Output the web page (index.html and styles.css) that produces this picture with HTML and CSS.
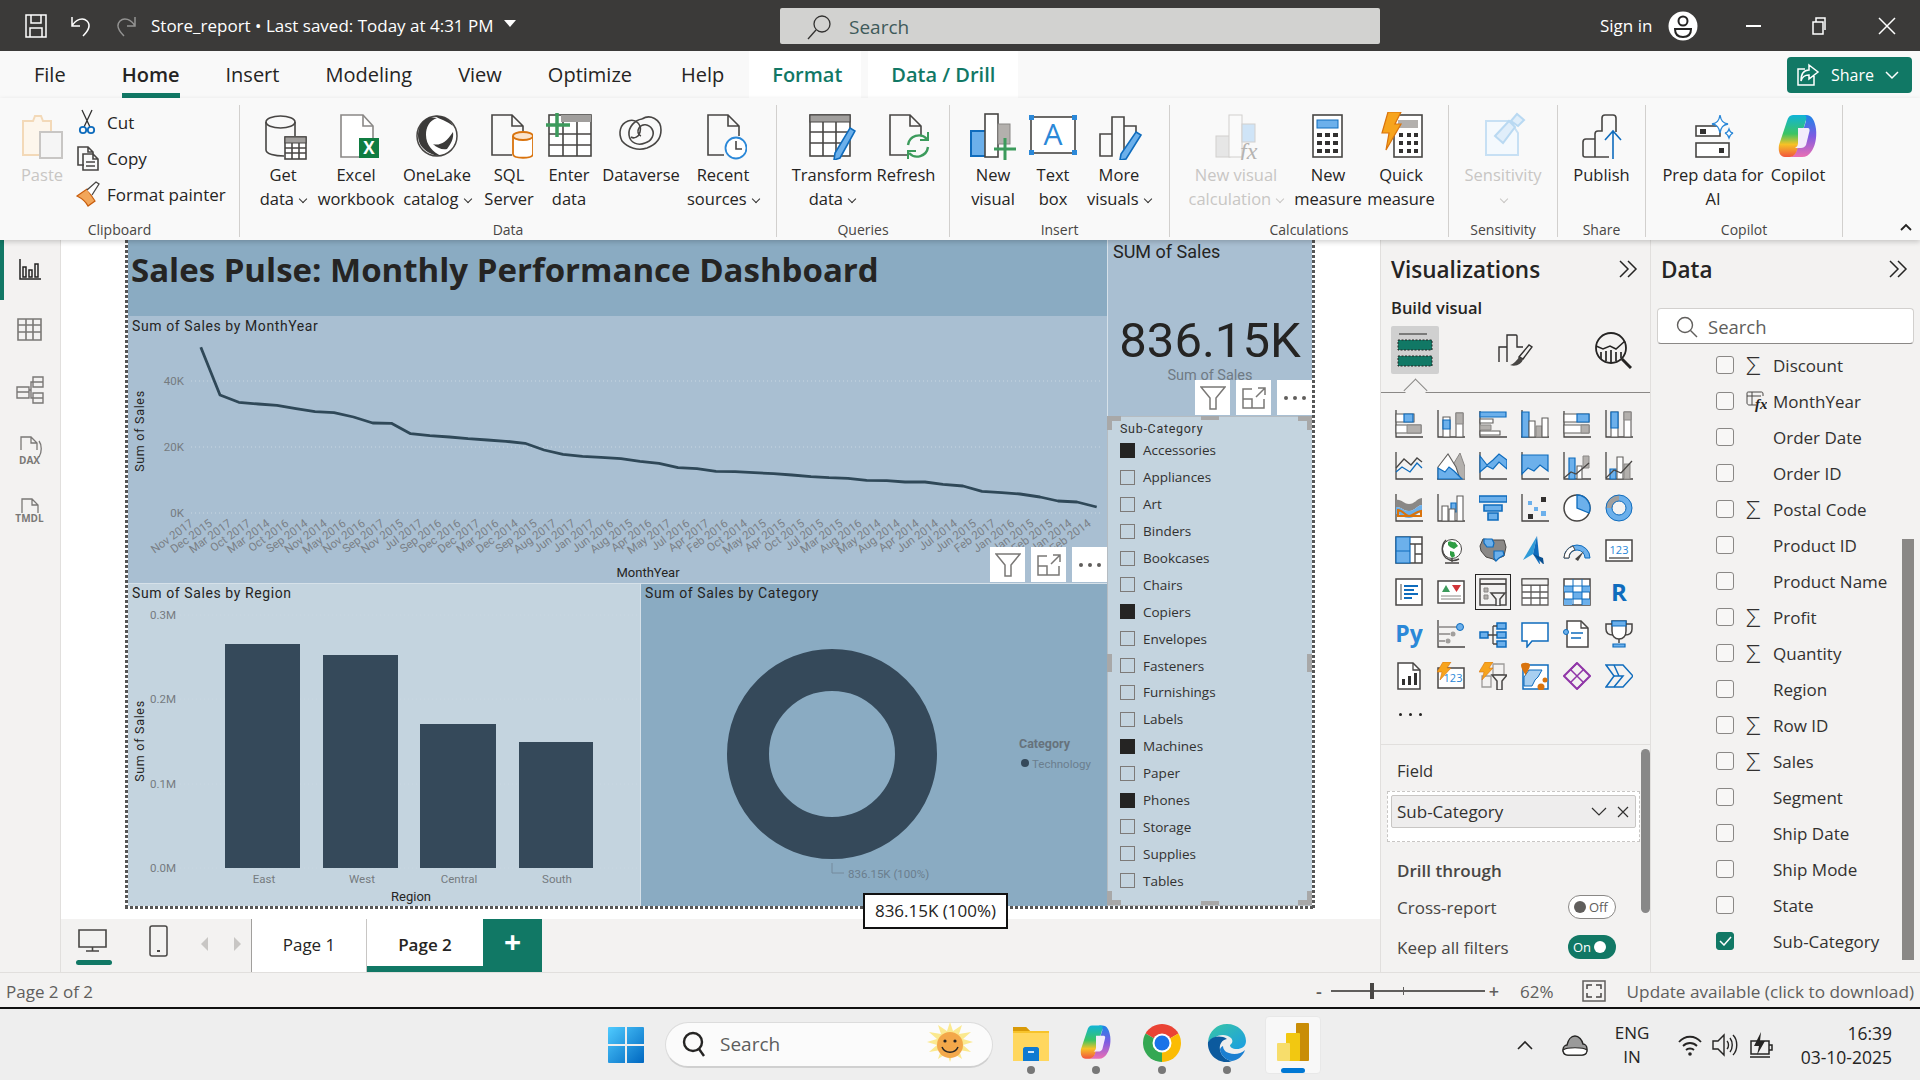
FILE: index.html
```html
<!DOCTYPE html>
<html lang="en">
<head>
    <meta charset="UTF-8">
    <title>Store_report - Power BI Desktop</title>
    <link rel="stylesheet" href="styles.css">
</head>
<body>

<!-- title bar -->
<header class="titlebar">
    <div class="tb-left">
        <svg class="tb-icon" width="24" height="24" viewBox="0 0 24 24"><path class="tb-ln" d="M2 1h20v22H2zM7 1v8h10V1M6 23v-9h12v9"/></svg>
        <svg class="tb-icon" width="24" height="24" viewBox="0 0 24 24"><path class="tb-ln" d="M3 3v9h8M3 12C7 5 14 3 18 7c4 4 2 9-4 15"/></svg>
        <svg class="tb-icon tb-dim" width="24" height="24" viewBox="0 0 24 24"><path class="tb-ln" d="M21 3v9h-8M21 12C17 5 10 3 6 7c-4 4-2 9 4 15"/></svg>
        <span class="tb-name">Store_report • Last saved: Today at 4:31 PM</span>
        <span class="tb-caret"></span>
    </div>
    <div class="tb-search">
        <svg width="26" height="26" viewBox="0 0 26 26"><circle class="tb-s" cx="16" cy="10" r="8"/><path class="tb-s" d="M10 16L2 25"/></svg>
        <span>Search</span>
    </div>
    <div class="tb-right">
        <span class="tb-sign">Sign in</span>
        <svg width="30" height="30" viewBox="0 0 30 30"><circle cx="15" cy="15" r="14.5" fill="#fff"/><circle cx="15" cy="10" r="4.5" fill="none" stroke="#252423" stroke-width="2"/><path d="M7 18h16c0 6-3 8-8 8s-8-2-8-8z" fill="none" stroke="#252423" stroke-width="2"/></svg>
        <span class="win-min"></span>
        <svg class="win-max" width="17" height="18" viewBox="0 0 17 18"><path class="tb-ln" d="M2 5h10v12H2zM5 5V1h9v12"/></svg>
        <svg class="win-close" width="18" height="18" viewBox="0 0 18 18"><path class="tb-ln" d="M1 1l16 16M17 1L1 17"/></svg>
    </div>
</header>

<!-- tabs -->
<nav class="tabrow">
    <div class="tab tab-file">File</div>
    <div class="tab active"><span>Home</span></div>
    <div class="tab">Insert</div>
    <div class="tab">Modeling</div>
    <div class="tab">View</div>
    <div class="tab">Optimize</div>
    <div class="tab tab-help">Help</div>
    <div class="tab ctx">Format</div>
    <div class="tab ctx">Data / Drill</div>
    <div class="share-btn">
        <svg width="24" height="24" viewBox="0 0 24 24"><path class="tb-ln" d="M18 13v9H2V6h7M13 2l9 7-9 7v-4c-4 0-7 2-8 6 0-7 3-11 8-11z"/></svg>
        <span>Share</span>
        <svg width="14" height="9" viewBox="0 0 14 9"><path class="tb-ln" d="M1 1l6 6 6-6"/></svg>
    </div>
</nav>

<!-- ribbon -->
<section class="ribbon">
    <div class="group g-clipboard">
        <div class="items">
            <div class="item disabled">
                <svg class="ri" viewBox="0 0 48 48"><path d="M5 9h10l2-5h6l2 5h8v34H5z" fill="#fdf6ec" stroke="#f3d9b8" stroke-width="2"/><path d="M22 20h22v26H22z" fill="#f5f5f5" stroke="#c8c6c4" stroke-width="2"/></svg>
                <div class="lbl">Paste</div>
            </div>
            <div class="small-list">
                <div class="small"><svg width="24" height="26" viewBox="0 0 24 26"><path d="M6 1l8 17M16 1L8 18" fill="none" stroke="#323130" stroke-width="1.3"/><circle cx="7" cy="21" r="3.2" fill="none" stroke="#0f6cbd" stroke-width="1.8"/><circle cx="15" cy="21" r="3.2" fill="none" stroke="#0f6cbd" stroke-width="1.8"/></svg><span>Cut</span></div>
                <div class="small"><svg width="24" height="26" viewBox="0 0 24 26"><path class="ic" d="M8 20H2V2h10l5 5v2M12 2v5h5"/><path class="ic" d="M7 9h10l5 5v11H7zM17 9v5h5M10 17h9M10 21h9"/></svg><span>Copy</span></div>
                <div class="small"><svg width="24" height="26" viewBox="0 0 24 26"><path d="M1 15l10-7 8 12-7 5C10 21 5 17 1 15z" fill="#f2a65a" stroke="#c85d0c" stroke-width="1.2"/><path d="M11 9l9-8 3 2-7 11" fill="#fff" stroke="#484644" stroke-width="1.3"/></svg><span>Format painter</span></div>
            </div>
        </div>
        <div class="group-name">Clipboard</div>
    </div>

    <div class="group g-data">
        <div class="items">
            <div class="item">
                <svg class="ri" viewBox="0 0 48 48"><path class="ic" d="M7 10v28c0 4 9 6 18 6M36 10v14"/><ellipse class="ic" cx="21.500" cy="10" rx="14.500" ry="6"/><rect class="ifw" x="26" y="25" width="21" height="22"/><rect class="idk" x="26" y="25" width="21" height="6"/><path class="ic" d="M26 36h21M26 41h21M33 31v16M40 31v16"/></svg>
                <div class="lbl">Get<br>data <i class="chev"></i></div>
            </div>
            <div class="item">
                <svg class="ri" viewBox="0 0 48 48"><path d="M9 3h22l10 11v31H9z" fill="#fff" stroke="#8a8886" stroke-width="1.6"/><path d="M31 3v11h10" fill="none" stroke="#8a8886" stroke-width="1.6"/><rect x="27" y="26" width="20" height="20" fill="#107c41"/><text class="x-mark" x="37" y="42">X</text></svg>
                <div class="lbl">Excel<br>workbook</div>
            </div>
            <div class="item">
                <svg class="ri" viewBox="0 0 48 48"><circle cx="24" cy="24" r="20" fill="#fff" stroke="#484644" stroke-width="1.5"/><path d="M17 5C6 9 1 24 9 35c5 6 13 9 19 9-8-4-15-11-15-21C13 15 16 9 24 6z" fill="#3b3a39"/><path d="M21 4c8-1 16 3 19 10-6-5-13-7-19-10zM20 32c6 2 13-1 20-12 1 6-2 12-6 17-5 1-10-1-14-5z" fill="#3b3a39"/></svg>
                <div class="lbl">OneLake<br>catalog <i class="chev"></i></div>
            </div>
            <div class="item">
                <svg class="ri" viewBox="0 0 48 48"><path class="ic" d="M27 43H7V3h20l11 11v5M27 3v11h11"/><path d="M28 24v18c0 5 20 5 20 0V24" fill="#fff" stroke="#d9730d" stroke-width="1.8"/><ellipse cx="38" cy="24" rx="10" ry="4" fill="#fbe3cb" stroke="#d9730d" stroke-width="1.8"/></svg>
                <div class="lbl">SQL<br>Server</div>
            </div>
            <div class="item">
                <svg class="ri" viewBox="0 0 48 48"><rect class="ifw" x="4" y="3" width="42" height="41"/><rect x="16" y="3" width="30" height="7" fill="#a19f9d"/><path class="ic" d="M4 22h42M4 33h42M18 10v34M32 10v34"/><path d="M12 1v24M1 13h24" stroke="#3c9b5c" stroke-width="3.500" fill="none"/></svg>
                <div class="lbl">Enter<br>data</div>
            </div>
            <div class="item">
                <svg class="ri" viewBox="0 0 48 48"><path class="ic" d="M25 7c8-5 19 0 19 11 0 9-6 15-14 18-9 3-19 0-25-7C1 21 3 12 11 9c8-3 14 4 12 11-1 5-6 7-9 5"/><path class="ic" d="M25 7c-7 1-14 8-13 16 1 8 9 11 16 8 7-2 10-9 7-14-3-5-10-6-13-1-2 3-1 7 2 8"/></svg>
                <div class="lbl">Dataverse</div>
            </div>
            <div class="item">
                <svg class="ri" viewBox="0 0 48 48"><path class="ic" d="M25 43H9V3h20l11 11v10M29 3v11h11"/><circle cx="37" cy="36" r="10.500" fill="#fff" stroke="#2b88d8" stroke-width="1.8"/><path d="M37 29v8h6" fill="none" stroke="#484644" stroke-width="1.6"/></svg>
                <div class="lbl">Recent<br>sources <i class="chev"></i></div>
            </div>
        </div>
        <div class="group-name">Data</div>
    </div>

    <div class="group g-queries">
        <div class="items">
            <div class="item">
                <svg class="ri" viewBox="0 0 48 48"><rect class="ifw" x="2" y="3" width="40" height="41"/><rect class="idk" x="2" y="3" width="40" height="7"/><path class="ic" d="M2 20h40M2 31h36M15 10v34M28 10v34"/><path d="M42 16l5 3-15 27-6 2 1-7z" fill="#6cb0eb" stroke="#0f6cbd" stroke-width="1.6"/></svg>
                <div class="lbl">Transform<br>data <i class="chev"></i></div>
            </div>
            <div class="item">
                <svg class="ri" viewBox="0 0 48 48"><path class="ic" d="M27 43H8V3h20l11 11v10M28 3v11h11"/><path d="M26 33a11 11 0 0 1 19-6M46 35a11 11 0 0 1-19 6" fill="none" stroke="#3c9b5c" stroke-width="2.400"/><path d="M46 20v8h-8M26 47v-8h8" fill="none" stroke="#3c9b5c" stroke-width="2"/></svg>
                <div class="lbl">Refresh</div>
            </div>
        </div>
        <div class="group-name">Queries</div>
    </div>

    <div class="group g-insert">
        <div class="items">
            <div class="item">
                <svg class="ri" viewBox="0 0 48 48"><rect x="2" y="19" width="15" height="25" fill="#6cb0eb" stroke="#0f6cbd" stroke-width="2"/><rect class="ifw" x="16" y="2" width="13" height="43"/><rect x="29" y="12" width="12" height="20" fill="#b3b0ad" stroke="#8a8886"/><path d="M36 26v22M25 37h22" stroke="#3c9b5c" stroke-width="3" fill="none"/></svg>
                <div class="lbl">New<br>visual</div>
            </div>
            <div class="item">
                <svg class="ri" viewBox="0 0 48 48"><rect class="ifw" x="2" y="5" width="44" height="36"/><path d="M0 3h5v5H0zM43 3h5v5h-5zM0 38h5v5H0zM43 38h5v5h-5z" fill="#2b88d8"/><text class="a-mark" x="24" y="33">A</text></svg>
                <div class="lbl">Text<br>box</div>
            </div>
            <div class="item">
                <svg class="ri" viewBox="0 0 48 48"><path class="ic" d="M17 44H5V22h12zM17 44V5h12v40M29 14h12v12"/><path d="M41 20l5 3-15 24-6 1 1-6z" fill="#6cb0eb" stroke="#0f6cbd" stroke-width="1.6"/></svg>
                <div class="lbl">More<br>visuals <i class="chev"></i></div>
            </div>
        </div>
        <div class="group-name">Insert</div>
    </div>

    <div class="group g-calc">
        <div class="items">
            <div class="item disabled">
                <svg class="ri" viewBox="0 0 48 48"><rect x="4" y="24" width="14" height="21" fill="#e6e6e6" stroke="#d2d0ce"/><rect x="17" y="3" width="13" height="42" fill="#fafafa" stroke="#d2d0ce"/><rect x="30" y="12" width="13" height="18" fill="#cfe4f7" stroke="#d2d0ce"/><text class="fx-mark" x="28" y="47">fx</text></svg>
                <div class="lbl">New visual<br>calculation <i class="chev"></i></div>
            </div>
            <div class="item">
                <svg class="ri" viewBox="0 0 48 48"><rect class="ifw" x="9" y="3" width="29" height="42"/><rect x="13" y="8" width="21" height="8" fill="#6cb0eb" stroke="#0f6cbd"/><path class="keys" d="M13 23h5M21 23h5M29 23h5M13 31h5M21 31h5M29 31h5M13 39h5M21 39h5M29 39h5"/></svg>
                <div class="lbl">New<br>measure</div>
            </div>
            <div class="item">
                <svg class="ri" viewBox="0 0 48 48"><rect class="ifw" x="17" y="3" width="28" height="42"/><rect x="21" y="8" width="20" height="8" fill="#b3b0ad"/><path class="keys" d="M22 23h4M30 23h4M37 23h4M22 31h4M30 31h4M37 31h4M22 39h4M30 39h4M37 39h4"/><path d="M11 0h13l-6 12h6L9 38l3-17H5z" fill="#f7a41d" stroke="#d9730d" stroke-width="1.2"/></svg>
                <div class="lbl">Quick<br>measure</div>
            </div>
        </div>
        <div class="group-name">Calculations</div>
    </div>

    <div class="group g-sens">
        <div class="items">
            <div class="item disabled">
                <svg class="ri" viewBox="0 0 48 48"><path d="M7 9h24l8 12v22H7z" fill="#f4f9fd" stroke="#c7e0f4" stroke-width="2"/><path d="M16 24L30 9l6 6-12 16zM32 9l6-7 7 6-6 6z" fill="#e0eefa" stroke="#b9d9f2" stroke-width="2"/></svg>
                <div class="lbl">Sensitivity<br><i class="chev"></i></div>
            </div>
        </div>
        <div class="group-name">Sensitivity</div>
    </div>

    <div class="group g-share">
        <div class="items">
            <div class="item">
                <svg class="ri" viewBox="0 0 48 48"><path class="ic" d="M17 27H8c-2 0-3 1-3 3v13c0 1 1 2 2 2h24M17 45V22c0-2 1-3 3-3h4V6c0-2 1-3 3-3h8c2 0 3 1 3 3v14"/><path d="M35 47V20M27 28l8-9 8 9" fill="none" stroke="#0f6cbd" stroke-width="1.6"/></svg>
                <div class="lbl">Publish</div>
            </div>
        </div>
        <div class="group-name">Share</div>
    </div>

    <div class="group g-copilot">
        <div class="items">
            <div class="item">
                <svg class="ri" viewBox="0 0 48 48"><rect class="ifw" x="7" y="14" width="24" height="10"/><rect x="11" y="17" width="6" height="5" fill="#323130"/><rect class="ifw" x="7" y="31" width="33" height="14"/><rect x="30" y="36" width="5" height="5" fill="#323130"/><path d="M31 3c1 6 3 8 8 9-5 1-7 3-8 9-1-6-3-8-8-9 5-1 7-3 8-9zM40 17c1 3 2 4 4 4-2 1-3 2-4 5-1-3-2-4-4-5 2 0 3-1 4-4z" fill="#fff" stroke="#2b88d8" stroke-width="1.3"/></svg>
                <div class="lbl">Prep data for<br>AI</div>
            </div>
            <div class="item">
                <svg class="ri" viewBox="0 0 48 48"><defs><linearGradient id="cp1" x1="0" y1="0" x2="0" y2="1"><stop offset="0" stop-color="#1a86e8"/><stop offset=".5" stop-color="#7d5be2"/><stop offset="1" stop-color="#ea6fb4"/></linearGradient><linearGradient id="cp2" x1="0" y1="0" x2="0" y2="1"><stop offset="0" stop-color="#10b4d8"/><stop offset=".45" stop-color="#3cc463"/><stop offset=".7" stop-color="#f6c226"/><stop offset="1" stop-color="#f2553d"/></linearGradient></defs><path d="M20 3h12c6 0 9 6 10 14 1 9-1 18-5 23-2 3-5 5-9 5H16c4-1 6-4 7-8l9-28c0-3-2-6-6-6z" fill="url(#cp1)"/><path d="M19 3h11c2 0 3 2 2 5l-9 30c-1 4-4 7-7 7H11C6 45 4 40 5 33L13 9c1-4 3-6 6-6z" fill="url(#cp2)"/><path d="M24 16h9c3 0 3 2 2 5l-3 12c-1 2-3 3-5 3h-6c2-1 3-3 3-5z" fill="#f3ecfb"/></svg>
                <div class="lbl">Copilot</div>
            </div>
        </div>
        <div class="group-name">Copilot</div>
    </div>

    <svg class="collapse" width="12" height="8" viewBox="0 0 12 8"><path d="M1 7l5-5 5 5" fill="none" stroke="#252423" stroke-width="1.8"/></svg>
</section>

<main class="main">
    <!-- left rail -->
    <aside class="rail">
        <div class="rail-btn active">
            <svg width="24" height="24" viewBox="0 0 24 24"><path d="M2 1v20h21" fill="none" stroke="#252423" stroke-width="1.5"/><path d="M5 9h3v10H5zM11 12h3v7h-3zM17 6h3v13h-3z" fill="none" stroke="#252423" stroke-width="1.5"/></svg>
        </div>
        <div class="rail-btn">
            <svg width="25" height="24" viewBox="0 0 25 24"><path d="M1 1h23v21H1zM1 7h23M1 14h23M9 1v21M16 1v21" fill="none" stroke="#7a7876" stroke-width="1.6"/></svg>
        </div>
        <div class="rail-btn">
            <svg width="28" height="28" viewBox="0 0 28 28"><path d="M1 11h12v11H1zM1 16h12M17 1h10v10H17zM17 6h10M17 17h10v10H17zM17 22h10M13 14h2V6h2M15 14v8h2" fill="none" stroke="#7a7876" stroke-width="1.4"/></svg>
        </div>
        <div class="rail-btn rail-doc">
            <svg width="26" height="24" viewBox="0 0 26 24"><path d="M4 15V2h10l6 6v7M14 2v6h6M22 6c3 4 3 11 0 16" fill="none" stroke="#7a7876" stroke-width="1.3"/></svg>
            <span>DAX</span>
        </div>
        <div class="rail-btn rail-doc">
            <svg width="24" height="20" viewBox="0 0 24 20"><path d="M4 16V2h10l6 6v8M14 2v6h6" fill="none" stroke="#7a7876" stroke-width="1.3"/></svg>
            <span>TMDL</span>
        </div>
    </aside>

    <div class="center">
        <div class="canvas">
            <div class="frame">
                <div class="report">
                    <div class="col-left">
                        <div class="visual title-card">Sales Pulse: Monthly Performance Dashboard</div>

                        <div class="visual line-card">
                            <svg class="chart" viewBox="128 316 979 267" width="979" height="267">
                                <text class="vis-title" x="132" y="331">Sum of Sales by MonthYear</text>
                                <path class="grid" d="M191 381H1102M191 447H1102M191 513H1102"/>
                                <text class="tick end" x="184" y="385">40K</text>
                                <text class="tick end" x="184" y="451">20K</text>
                                <text class="tick end" x="184" y="517">0K</text>
                                <text class="axis-y" transform="translate(144 431) rotate(-90)">Sum of Sales</text>
                                <polyline class="line" points="200.800,347.300 220,395 238.800,402.300 258.400,404 277,405.300 296,408.700 315,411.700 334,412.700 353.500,417 372.700,423 391.400,423.300 410.600,433.700 429.800,435.700 449.500,437 468,438.700 487.400,440 506,441.300 525,443.300 544,450 563,454.300 582.500,456.300 601,457.300 621,458.700 640,461.300 659,463.300 678,467.700 697,468.700 716,471.300 735,471.700 754,472.700 773.600,473.700 792,475 811,476.700 829,477.700 848,478.300 866.700,480.300 886.700,480.700 905,482 925,482 943,484.300 963,486 982,491.300 1001.700,492.700 1020,494 1040,497 1058,501 1077,502 1096.700,507"/>
                                <g class="xl">
                                    <text transform="translate(194 525) rotate(-36)">Nov 2017</text>
                                    <text transform="translate(213.100 525) rotate(-36)">Dec 2015</text>
                                    <text transform="translate(232.200 525) rotate(-36)">Mar 2017</text>
                                    <text transform="translate(251.300 525) rotate(-36)">Oct 2017</text>
                                    <text transform="translate(270.400 525) rotate(-36)">Mar 2014</text>
                                    <text transform="translate(289.500 525) rotate(-36)">Oct 2016</text>
                                    <text transform="translate(308.600 525) rotate(-36)">Sep 2014</text>
                                    <text transform="translate(327.700 525) rotate(-36)">Nov 2014</text>
                                    <text transform="translate(346.800 525) rotate(-36)">May 2016</text>
                                    <text transform="translate(365.900 525) rotate(-36)">Nov 2016</text>
                                    <text transform="translate(385 525) rotate(-36)">Sep 2017</text>
                                    <text transform="translate(404.100 525) rotate(-36)">Nov 2015</text>
                                    <text transform="translate(423.200 525) rotate(-36)">Jul 2017</text>
                                    <text transform="translate(442.300 525) rotate(-36)">Sep 2016</text>
                                    <text transform="translate(461.400 525) rotate(-36)">Dec 2016</text>
                                    <text transform="translate(480.500 525) rotate(-36)">Dec 2017</text>
                                    <text transform="translate(499.600 525) rotate(-36)">Mar 2016</text>
                                    <text transform="translate(518.700 525) rotate(-36)">Dec 2014</text>
                                    <text transform="translate(537.800 525) rotate(-36)">Sep 2015</text>
                                    <text transform="translate(556.900 525) rotate(-36)">Aug 2017</text>
                                    <text transform="translate(576 525) rotate(-36)">Jun 2017</text>
                                    <text transform="translate(595.100 525) rotate(-36)">Jan 2017</text>
                                    <text transform="translate(614.200 525) rotate(-36)">Jun 2016</text>
                                    <text transform="translate(633.300 525) rotate(-36)">Aug 2015</text>
                                    <text transform="translate(652.400 525) rotate(-36)">Apr 2016</text>
                                    <text transform="translate(671.500 525) rotate(-36)">May 2017</text>
                                    <text transform="translate(690.600 525) rotate(-36)">Jul 2016</text>
                                    <text transform="translate(709.700 525) rotate(-36)">Apr 2017</text>
                                    <text transform="translate(728.800 525) rotate(-36)">Feb 2016</text>
                                    <text transform="translate(747.900 525) rotate(-36)">Oct 2014</text>
                                    <text transform="translate(767 525) rotate(-36)">May 2015</text>
                                    <text transform="translate(786.100 525) rotate(-36)">Apr 2015</text>
                                    <text transform="translate(805.200 525) rotate(-36)">Oct 2015</text>
                                    <text transform="translate(824.300 525) rotate(-36)">Jul 2015</text>
                                    <text transform="translate(843.400 525) rotate(-36)">Mar 2015</text>
                                    <text transform="translate(862.500 525) rotate(-36)">Aug 2016</text>
                                    <text transform="translate(881.600 525) rotate(-36)">May 2014</text>
                                    <text transform="translate(900.700 525) rotate(-36)">Aug 2014</text>
                                    <text transform="translate(919.800 525) rotate(-36)">Apr 2014</text>
                                    <text transform="translate(938.900 525) rotate(-36)">Jun 2014</text>
                                    <text transform="translate(958 525) rotate(-36)">Jul 2014</text>
                                    <text transform="translate(977.100 525) rotate(-36)">Jun 2015</text>
                                    <text transform="translate(996.200 525) rotate(-36)">Feb 2017</text>
                                    <text transform="translate(1015.300 525) rotate(-36)">Jan 2016</text>
                                    <text transform="translate(1034.400 525) rotate(-36)">Jan 2015</text>
                                    <text transform="translate(1053.500 525) rotate(-36)">Feb 2015</text>
                                    <text transform="translate(1072.600 525) rotate(-36)">Jan 2014</text>
                                    <text transform="translate(1091.700 525) rotate(-36)">Feb 2014</text>
                                </g>
                                <text class="axis-x" x="648" y="577">MonthYear</text>
                            </svg>
                            <div class="actions">
                                <div class="act"><svg width="26" height="24" viewBox="0 0 26 24"><path class="act-ln" d="M1 1h24l-9 11v11h-6V12z"/></svg></div>
                                <div class="act"><svg width="24" height="22" viewBox="0 0 24 22"><path class="act-ln" d="M10 2H1v19h21v-9M1 12h9v9M14 10l9-9M16 1h7v7"/></svg></div>
                                <div class="act act-more"><i></i><i></i><i></i></div>
                            </div>
                        </div>

                        <div class="bottom-row">
                            <div class="visual region-card">
                                <svg class="chart" viewBox="128 583 512 323" width="512" height="323">
                                    <text class="vis-title" x="132" y="598">Sum of Sales by Region</text>
                                    <path class="grid" d="M180 615H640M180 699H640M180 784H640M180 868H640"/>
                                    <text class="tick end" x="176" y="619">0.3M</text>
                                    <text class="tick end" x="176" y="703">0.2M</text>
                                    <text class="tick end" x="176" y="788">0.1M</text>
                                    <text class="tick end" x="176" y="872">0.0M</text>
                                    <rect class="bar" x="225" y="644" width="75" height="224"/>
                                    <rect class="bar" x="323" y="655" width="75" height="213"/>
                                    <rect class="bar" x="420" y="724" width="76" height="144"/>
                                    <rect class="bar" x="519" y="742" width="74" height="126"/>
                                    <text class="tick mid" x="264" y="883">East</text>
                                    <text class="tick mid" x="362" y="883">West</text>
                                    <text class="tick mid" x="459" y="883">Central</text>
                                    <text class="tick mid" x="557" y="883">South</text>
                                    <text class="axis-x" x="411" y="901">Region</text>
                                    <text class="axis-y" transform="translate(144 741) rotate(-90)">Sum of Sales</text>
                                </svg>
                            </div>
                            <div class="visual category-card">
                                <svg class="chart" viewBox="640 583 467 323" width="467" height="323">
                                    <text class="vis-title" x="645" y="598">Sum of Sales by Category</text>
                                    <circle class="donut" cx="832" cy="754" r="84"/>
                                    <path class="leader" d="M832 863v10h12"/>
                                    <text class="donut-label" x="848" y="878">836.15K (100%)</text>
                                    <text class="legend-title" x="1019" y="748">Category</text>
                                    <circle cx="1025" cy="763" r="4" fill="#35495a"/>
                                    <text class="donut-label" x="1032" y="768">Technology</text>
                                </svg>
                            </div>
                        </div>
                    </div>

                    <div class="col-right">
                        <div class="visual kpi-card">
                            <div class="kpi-title">SUM of Sales</div>
                            <div class="kpi-value">836.15K</div>
                            <div class="kpi-label">Sum of Sales</div>
                            <div class="actions">
                                <div class="act"><svg width="26" height="24" viewBox="0 0 26 24"><path class="act-ln" d="M1 1h24l-9 11v11h-6V12z"/></svg></div>
                                <div class="act"><svg width="24" height="22" viewBox="0 0 24 22"><path class="act-ln" d="M10 2H1v19h21v-9M1 12h9v9M14 10l9-9M16 1h7v7"/></svg></div>
                                <div class="act act-more"><i></i><i></i><i></i></div>
                            </div>
                        </div>
                        <div class="visual slicer">
                            <span class="hd tl"></span><span class="hd tm"></span><span class="hd tr"></span>
                            <span class="hd ml"></span><span class="hd mr"></span>
                            <span class="hd bl"></span><span class="hd bm"></span><span class="hd br"></span>
                            <div class="slicer-head">Sub-Category</div>
                            <div class="slicer-row"><span class="sq on"></span>Accessories</div>
                            <div class="slicer-row"><span class="sq"></span>Appliances</div>
                            <div class="slicer-row"><span class="sq"></span>Art</div>
                            <div class="slicer-row"><span class="sq"></span>Binders</div>
                            <div class="slicer-row"><span class="sq"></span>Bookcases</div>
                            <div class="slicer-row"><span class="sq"></span>Chairs</div>
                            <div class="slicer-row"><span class="sq on"></span>Copiers</div>
                            <div class="slicer-row"><span class="sq"></span>Envelopes</div>
                            <div class="slicer-row"><span class="sq"></span>Fasteners</div>
                            <div class="slicer-row"><span class="sq"></span>Furnishings</div>
                            <div class="slicer-row"><span class="sq"></span>Labels</div>
                            <div class="slicer-row"><span class="sq on"></span>Machines</div>
                            <div class="slicer-row"><span class="sq"></span>Paper</div>
                            <div class="slicer-row"><span class="sq on"></span>Phones</div>
                            <div class="slicer-row"><span class="sq"></span>Storage</div>
                            <div class="slicer-row"><span class="sq"></span>Supplies</div>
                            <div class="slicer-row"><span class="sq"></span>Tables</div>
                        </div>
                    </div>
                </div>
                <div class="tooltip">836.15K (100%)</div>
            </div>
        </div>

        <!-- page tabs -->
        <div class="pagebar">
            <div class="view-btn active">
                <svg width="30" height="24" viewBox="0 0 30 24"><path d="M1 1h27v17H1zM14.500 18v4M8 22h13" fill="none" stroke="#484644" stroke-width="1.6"/></svg>
            </div>
            <div class="view-btn">
                <svg width="20" height="32" viewBox="0 0 20 32"><rect x="1" y="1" width="17" height="30" rx="2" fill="none" stroke="#484644" stroke-width="1.5"/><path d="M8 26h3" stroke="#484644" stroke-width="2"/></svg>
            </div>
            <div class="page-nav">
                <span class="tri-l"></span>
                <span class="tri-r"></span>
            </div>
            <div class="page-tab">Page 1</div>
            <div class="page-tab current">Page 2</div>
            <div class="page-add">+</div>
        </div>
    </div>

    <!-- visualizations pane -->
    <aside class="pane viz-pane">
        <div class="pane-head">
            <span>Visualizations</span>
            <svg class="dbl" width="20" height="18" viewBox="0 0 20 18"><path d="M2 1l8 8-8 8M10 1l8 8-8 8" fill="none" stroke="#252423" stroke-width="1.500"/></svg>
        </div>
        <div class="build-title">Build visual</div>
        <div class="viz-tabs">
            <div class="viz-tab selected">
                <svg width="36" height="36" viewBox="0 0 36 36"><path d="M2 2h28" stroke="#252423" stroke-width="1"/><rect x="1" y="8" width="34" height="10" fill="#117865" stroke="#252423" stroke-dasharray="2 1.500"/><rect x="1" y="24" width="34" height="10" fill="#117865" stroke="#252423" stroke-dasharray="2 1.500"/></svg>
            </div>
            <div class="viz-tab">
                <svg width="36" height="36" viewBox="0 0 36 36"><path d="M2 30V15h8M10 30V3h9c1 0 1 1 1 1v11h6" fill="none" stroke="#323130" stroke-width="1.400"/><path d="M22 25l10-12 3 2-9 12z" fill="none" stroke="#323130" stroke-width="1.400"/><path d="M13 33c6 2 12-1 13-6l-4-2c-2 3-5 7-9 8z" fill="#484644"/></svg>
            </div>
            <div class="viz-tab">
                <svg width="38" height="38" viewBox="0 0 38 38"><circle cx="17" cy="17" r="15" fill="none" stroke="#252423" stroke-width="1.800"/><path d="M2 15l7 3 7-3 6 3 9-8" fill="none" stroke="#252423" stroke-width="1.500"/><path d="M7 21v7M12 20v10M17 19v12M22 21v9M27 21v6" stroke="#323130" stroke-width="1.800"/><path d="M28 28l9 9" stroke="#252423" stroke-width="3"/></svg>
            </div>
        </div>
        <div class="viz-grid">
            <svg class="vi" viewBox="0 0 28 28"><path class="ln" d="M1 0v27h27"/><path class="wh" d="M1 4h18v8H1zM1 15h25v8H1z"/><path class="bl" d="M9 4h9v8H9z"/><path class="gy" d="M12 15h14v8H12z"/></svg>
            <svg class="vi" viewBox="0 0 28 28"><path class="ln" d="M1 0v27h27"/><path class="wh" d="M6 7h7v20H6zM19 3h7v24h-7z"/><path class="bl" d="M6 10h7v9H6z"/><path class="gy" d="M19 3h7v11h-7z"/></svg>
            <svg class="vi" viewBox="0 0 28 28"><path class="ln" d="M1 1v26h27"/><path class="bl" d="M1 2h26v5H1z"/><path class="wh" d="M1 9h13v4H1z"/><path class="gy" d="M1 15h11v5H1z"/><path class="wh" d="M1 21h20v4H1z"/></svg>
            <svg class="vi" viewBox="0 0 28 28"><path class="ln" d="M0 27h28M1 0v27"/><path class="bl" d="M1 2h7v25H1z"/><path class="wh" d="M8 11h6v16H8z"/><path class="gy" d="M15 16h6v11h-6z"/><path class="wh" d="M21 8h6v19h-6z"/></svg>
            <svg class="vi" viewBox="0 0 28 28"><path class="ln" d="M1 1v26h27"/><path class="wh" d="M1 4h25v8H1zM1 15h25v8H1z"/><path class="bl" d="M14 4h12v8H14z"/><path class="gy" d="M18 15h8v8h-8z"/></svg>
            <svg class="vi" viewBox="0 0 28 28"><path class="ln" d="M1 0v27h27"/><path class="wh" d="M6 2h7v25H6zM19 2h7v25h-7z"/><path class="bl" d="M6 2h7v16H6z"/><path class="gy" d="M19 2h7v8h-7z"/></svg>

            <svg class="vi" viewBox="0 0 28 28"><path class="ln" d="M1 0v27h27"/><path class="ln" d="M1 16l8-9 7 6 6-7 5 4"/><path class="bln" d="M1 20l6-5 8 5 7-9 5 5"/></svg>
            <svg class="vi" viewBox="0 0 28 28"><path class="ln" d="M0 27h28"/><path class="gy" d="M14 16l9-15 5 14v12H18z"/><path class="wh" d="M1 15L11 2l8 13 4 12H1z"/><path class="bl" d="M1 27V16l7 4 4-5 5 4 8 8z"/></svg>
            <svg class="vi" viewBox="0 0 28 28"><path class="ln" d="M1 0v27h27"/><path class="bl" d="M1 4l7 9 6-5 6-6 8 6v9l-8-7-6 7-6-3-7 6z"/></svg>
            <svg class="vi" viewBox="0 0 28 28"><path class="ln" d="M1 0v27h27"/><path class="bl" d="M1 3h26v16l-8-6-6 6-6-3-6 6z"/></svg>
            <svg class="vi" viewBox="0 0 28 28"><path class="ln" d="M1 0v27h27"/><path class="bl" d="M6 6h6v21H6z"/><path class="wh" d="M14 14h5v13h-5z"/><path class="gy" d="M20 4h6v12h-6z"/><path class="ln" d="M1 26l7-6 5 2 6-5 7-6"/></svg>
            <svg class="vi" viewBox="0 0 28 28"><path class="ln" d="M1 0v27h27"/><path class="bl" d="M5 17h6v10H5z"/><path class="wh" d="M12 5h6v22h-6z"/><path class="gy" d="M19 12h6v15h-6z"/><path class="ln" d="M1 26l8-8 7 3 11-12"/></svg>

            <svg class="vi" viewBox="0 0 28 28"><path class="ln" d="M1 0v27h27"/><path d="M1 6c6-1 7 4 13 4s7-5 13-6v7c-6 1-7 6-13 6s-7-4-13-4z" fill="#8a8886"/><path d="M1 13c6 0 7 4 13 4s7-5 13-6v7c-6 1-7 6-13 6S7 20 1 20z" fill="#6cb0eb"/><path d="M3 16c5 0 7 6 11 6s6-4 12-5v5H3z" fill="none" stroke="#d9730d" stroke-width="2"/></svg>
            <svg class="vi" viewBox="0 0 28 28"><path class="ln" d="M1 0v27h27"/><path class="wh" d="M5 12h6v15H5zM20 2h6v25h-6z"/><path class="bl" d="M14 9h5v9h-5z"/><path class="wh" d="M12 15h6v12h-6z"/></svg>
            <svg class="vi" viewBox="0 0 28 28"><path class="fun" d="M0 2h28v6h-28zM5 11h18v6H5zM9 19h10v7H9z"/></svg>
            <svg class="vi" viewBox="0 0 28 28"><path class="ln" d="M1 0v27h27"/><path d="M20 3h5v5h-5zM7 20h5v5H7z" fill="#323130"/><path d="M7 7h4v4H7zM13 13h4v4h-4zM20 17h5v5h-5z" fill="#6cb0eb"/></svg>
            <svg class="vi" viewBox="0 0 28 28"><circle cx="14" cy="14" r="13" fill="#fff" stroke="#484644" stroke-width="1.500"/><path d="M14 1a13 13 0 0 1 12 18L14 14z" fill="#6cb0eb" stroke="#0f6cbd" stroke-width="1.300"/></svg>
            <svg class="vi" viewBox="0 0 28 28"><circle cx="14" cy="14" r="10" fill="none" stroke="#6cb0eb" stroke-width="6"/><path d="M4 14a10 10 0 0 1 10-10" fill="none" stroke="#a19f9d" stroke-width="6"/><circle cx="14" cy="14" r="13" fill="none" stroke="#0f6cbd"/><circle cx="14" cy="14" r="7" fill="none" stroke="#0f6cbd"/></svg>

            <svg class="vi" viewBox="0 0 28 28"><rect x="1" y="1" width="26" height="26" fill="#fff" stroke="#484644" stroke-width="1.500"/><path class="bl" d="M1 1h14v14H1zM1 15h14v12H1z"/><path class="ln" d="M15 8h12M20 8v19M20 18h7"/></svg>
            <svg class="vi" viewBox="0 0 28 28"><circle cx="15" cy="13" r="9.500" fill="#fff" stroke="#484644"/><path d="M11 6c3-2 4 1 7 0l3 4-4 3-4-2-2-2zM13 15l4 1 1 4-3 2-2-3z" fill="#2f9e44"/><path d="M9 4C4 9 4 17 9 22c4 3 9 3 13 1M15 23v3M8 27h14" fill="none" stroke="#484644" stroke-width="1.500"/></svg>
            <svg class="vi" viewBox="0 0 28 28"><path d="M4 3l9 1 12 0 2 7-2 9-5 2-3 3-3-2-7-2-5-6-1-5z" fill="#8a8886" stroke="#484644"/><path class="bl" d="M5 3h8l2 4-1 4-6 0-3-4zM15 15h9l1 4-5 3-3 3-2-3z"/></svg>
            <svg class="vi" viewBox="0 0 28 28"><path d="M16 0l-14 24 10-6z" fill="#2f9bd8"/><path d="M16 0l3 29-7-11z" fill="#0f6cbd"/><path d="M12 18l10 4 1 7z" fill="#094f8f"/></svg>
            <svg class="vi" viewBox="0 0 28 28"><path d="M1 22a13 13 0 0 1 26 0h-5a8 8 0 0 0-16 0z" fill="#6cb0eb" stroke="#0f6cbd"/><path d="M1 22a13 13 0 0 1 9-12l2 4a8 8 0 0 0-6 8z" fill="#fff" stroke="#484644"/><path d="M12 23l9-8-6 10z" fill="#484644"/></svg>
            <svg class="vi" viewBox="0 0 28 28"><rect x="1" y="4" width="26" height="21" fill="#fff" stroke="#484644" stroke-width="1.500"/><text class="mini" x="14" y="18">123</text><path class="ln" d="M4 22h20"/></svg>

            <svg class="vi" viewBox="0 0 28 28"><rect x="1" y="1" width="26" height="26" fill="#fff" stroke="#484644" stroke-width="1.500"/><path d="M6 6v16" stroke="#8a8886" stroke-width="1.500"/><path d="M9 8h14M9 12h10M9 16h14M9 20h8" stroke="#0f6cbd" stroke-width="1.800"/></svg>
            <svg class="vi" viewBox="0 0 28 28"><rect x="1" y="3" width="26" height="22" fill="#fff" stroke="#484644" stroke-width="1.500"/><path d="M5 14l4-7 4 7z" fill="#3c9b5c"/><path d="M15 7h9l-4.500 7z" fill="#d13438"/><path d="M4 18h20M4 21h20" stroke="#8a8886"/></svg>
            <span class="vi-active"><svg class="vi" viewBox="0 0 28 28"><rect x="1" y="1" width="26" height="26" fill="#f3f2f1" stroke="#484644" stroke-width="1.500"/><path d="M1 6h26" stroke="#484644" stroke-width="1.800"/><path class="gy" d="M5 10h4v4H5zM5 17h4v4H5z"/><path d="M12 15h14l-5 6v7h-4v-7z" fill="#f3f2f1" stroke="#484644" stroke-width="1.500"/></svg></span>
            <svg class="vi" viewBox="0 0 28 28"><path d="M1 1h26v26H1zM1 7h26M1 14h26M1 20h26M10 7v20M19 7v20" fill="#fff" stroke="#605e5c" stroke-width="1.300"/><rect x="1" y="1" width="26" height="6" fill="#f3f2f1" stroke="#484644"/></svg>
            <svg class="vi" viewBox="0 0 28 28"><rect x="1" y="1" width="26" height="26" fill="#fff" stroke="#484644" stroke-width="1.500"/><path d="M1 8h9v6H1zM19 8h8v6h-8zM1 21h8v6H1zM10 14h9v7h-9zM19 21h8v6h-8z" fill="#6cb0eb"/><path d="M1 8h26M1 14h26M1 21h26M10 1v26M19 1v26" stroke="#0f6cbd"/></svg>
            <svg class="vi" viewBox="0 0 28 28"><text class="bigb" x="14" y="23">R</text></svg>

            <svg class="vi" viewBox="0 0 28 28"><text class="bigb py" x="14" y="22">Py</text></svg>
            <svg class="vi" viewBox="0 0 28 28"><path class="ln" d="M1 0v27h27"/><path d="M1 7h18M1 14h12M1 21h7" stroke="#8a8886" stroke-width="1.300"/><circle cx="23" cy="7" r="3.500" fill="#6cb0eb" stroke="#0f6cbd"/><circle cx="16" cy="14" r="2.500" fill="#a19f9d"/><circle cx="11" cy="21" r="2.500" fill="#a19f9d"/></svg>
            <svg class="vi" viewBox="0 0 28 28"><path d="M1 12h8v6H1zM18 3h9v6h-9zM18 12h9v6h-9zM18 21h9v6h-9z" fill="#6cb0eb" stroke="#0f6cbd" stroke-width="1.500"/><path d="M9 15h9M14 6v18M14 6h4M14 24h4" fill="none" stroke="#484644" stroke-width="1.300"/></svg>
            <svg class="vi" viewBox="0 0 28 28"><path d="M1 3h26v18H11l-5 6v-6H1z" fill="#fff" stroke="#0f6cbd" stroke-width="1.500"/></svg>
            <svg class="vi" viewBox="0 0 28 28"><path d="M4 1h14l7 7v19H4z" fill="#fff" stroke="#484644" stroke-width="1.500"/><path d="M18 1v7h7" fill="none" stroke="#484644" stroke-width="1.300"/><circle cx="3" cy="12" r="2.500" fill="#6cb0eb" stroke="#0f6cbd"/><path d="M8 13h12M8 18h10" stroke="#0f6cbd" stroke-width="1.500"/></svg>
            <svg class="vi" viewBox="0 0 28 28"><path d="M7 1h14v10c0 5-3 8-7 8s-7-3-7-8z" fill="#fff" stroke="#484644" stroke-width="1.500"/><path class="bl" d="M7 1h14v5H7z"/><path d="M7 4H1v5c0 4 3 6 7 6M21 4h6v5c0 4-3 6-7 6M14 19v4" fill="none" stroke="#484644" stroke-width="1.500"/><path class="bl" d="M8 24h12v3H8z"/></svg>

            <svg class="vi" viewBox="0 0 28 28"><path d="M3 1h15l7 7v19H3z" fill="#fff" stroke="#484644" stroke-width="1.500"/><path d="M18 1v7h7" fill="none" stroke="#484644" stroke-width="1.300"/><path d="M7 17h3v6H7zM13 14h3v9h-3zM19 11h3v12h-3z" fill="#323130"/></svg>
            <svg class="vi" viewBox="0 0 28 28"><rect x="1" y="6" width="26" height="20" fill="#fff" stroke="#484644" stroke-width="1.500"/><text class="mini" x="16" y="20">123</text><path d="M6 0h8l-4 6h4L3 18l2-8H0z" fill="#f7a41d" stroke="#d9730d" stroke-width=".6"/></svg>
            <svg class="vi" viewBox="0 0 28 28"><path class="ln" d="M14 2h11v11H14zM3 14h9v11H3z" stroke-opacity=".5"/><path d="M13 13h15l-5 6v9h-5v-9z" fill="#f3f2f1" stroke="#484644" stroke-width="1.500"/><path d="M6 0h8l-4 6h4L3 18l2-8H0z" fill="#f7a41d" stroke="#d9730d" stroke-width=".6"/></svg>
            <svg class="vi" viewBox="0 0 28 28"><path d="M2 3h25v24H2z" fill="#fff" stroke="#0f6cbd" stroke-width="1.500"/><path d="M8 8h13l-4 7-3 3-3 6H3v-9z" fill="#a8cff0" stroke="#0f6cbd"/><path d="M0 3c0-3 9-3 9 0 0 4-4 8-4.500 11C4 11 0 7 0 3z" fill="#d9730d"/><circle cx="24" cy="18" r="2.500" fill="#d9730d"/><circle cx="20" cy="25" r="3.500" fill="#d9730d"/></svg>
            <svg class="vi" viewBox="0 0 28 28"><path d="M14 1l13 13-13 13L1 14z" fill="none" stroke="#9036a8" stroke-width="2"/><path d="M7 7l14 14M21 7L7 21M14 1L7 8M14 27l7-7" fill="none" stroke="#9036a8" stroke-width="1.500"/></svg>
            <svg class="vi" viewBox="0 0 28 28"><path d="M1 3h17l10 11-10 11H1l8-11z" fill="#f3f2f1" stroke="#0f6cbd" stroke-width="1.500"/><path d="M9 14h9l-9 11M14 14l-5-11" fill="none" stroke="#0f6cbd" stroke-width="1.500"/></svg>
        </div>
        <div class="viz-more"><i></i><i></i><i></i></div>
        <div class="field-sec">
            <div class="field-label">Field</div>
            <div class="well">
                <div class="pill">
                    <span>Sub-Category</span>
                    <svg width="16" height="9" viewBox="0 0 16 9"><path d="M1 1l7 7 7-7" fill="none" stroke="#323130" stroke-width="1.200"/></svg>
                    <svg width="12" height="12" viewBox="0 0 12 12"><path d="M1 1l10 10M11 1L1 11" fill="none" stroke="#323130" stroke-width="1.200"/></svg>
                </div>
            </div>
            <div class="drill-title">Drill through</div>
            <div class="toggle-row">
                <span>Cross-report</span>
                <span class="toggle off"><i></i><b>Off</b></span>
            </div>
            <div class="toggle-row">
                <span>Keep all filters</span>
                <span class="toggle on"><b>On</b><i></i></span>
            </div>
            <div class="pane-scroll"></div>
        </div>
    </aside>

    <!-- data pane -->
    <aside class="pane data-pane">
        <div class="pane-head">
            <span>Data</span>
            <svg class="dbl" width="20" height="18" viewBox="0 0 20 18"><path d="M2 1l8 8-8 8M10 1l8 8-8 8" fill="none" stroke="#252423" stroke-width="1.500"/></svg>
        </div>
        <div class="data-search">
            <svg width="22" height="22" viewBox="0 0 22 22"><circle cx="9" cy="9" r="7.500" fill="none" stroke="#605e5c" stroke-width="1.400"/><path d="M14.500 14.500L21 21" stroke="#605e5c" stroke-width="1.400"/></svg>
            <span>Search</span>
        </div>
        <div class="field-list">
            <div class="field-row"><span class="cb"></span><span class="fi">Σ</span>Discount</div>
            <div class="field-row"><span class="cb"></span><span class="fi"><svg width="21" height="21" viewBox="0 0 21 21"><path d="M10 14H3c-1 0-2-1-2-2V2c0-1 1-1 2-1h12c1 0 2 0 2 2v2M6 1v13M1 5h14" fill="none" stroke="#484644"/><text class="fx-mini" x="9" y="18">fx</text></svg></span>MonthYear</div>
            <div class="field-row"><span class="cb"></span><span class="fi"></span>Order Date</div>
            <div class="field-row"><span class="cb"></span><span class="fi"></span>Order ID</div>
            <div class="field-row"><span class="cb"></span><span class="fi">Σ</span>Postal Code</div>
            <div class="field-row"><span class="cb"></span><span class="fi"></span>Product ID</div>
            <div class="field-row"><span class="cb"></span><span class="fi"></span>Product Name</div>
            <div class="field-row"><span class="cb"></span><span class="fi">Σ</span>Profit</div>
            <div class="field-row"><span class="cb"></span><span class="fi">Σ</span>Quantity</div>
            <div class="field-row"><span class="cb"></span><span class="fi"></span>Region</div>
            <div class="field-row"><span class="cb"></span><span class="fi">Σ</span>Row ID</div>
            <div class="field-row"><span class="cb"></span><span class="fi">Σ</span>Sales</div>
            <div class="field-row"><span class="cb"></span><span class="fi"></span>Segment</div>
            <div class="field-row"><span class="cb"></span><span class="fi"></span>Ship Date</div>
            <div class="field-row"><span class="cb"></span><span class="fi"></span>Ship Mode</div>
            <div class="field-row"><span class="cb"></span><span class="fi"></span>State</div>
            <div class="field-row"><span class="cb checked"><svg width="13" height="10" viewBox="0 0 13 10"><path d="M1 5l4 4 7-8" fill="none" stroke="#fff" stroke-width="1.500"/></svg></span><span class="fi"></span>Sub-Category</div>
        </div>
        <div class="data-scroll"></div>
    </aside>
</main>

<!-- status bar -->
<footer class="status">
    <span class="status-page">Page 2 of 2</span>
    <div class="status-right">
        <span class="zoom-sign">-</span>
        <span class="zoom-slider"><i class="thumb"></i><i class="mid-tick"></i></span>
        <span class="zoom-sign plus">+</span>
        <span class="zoom-pct">62%</span>
        <svg class="fit" width="24" height="22" viewBox="0 0 24 22"><rect x="1" y="1" width="22" height="20" fill="none" stroke="#605e5c" stroke-width="1.500"/><path d="M5 9V5h5M14 5h5v4M19 13v4h-5M10 17H5v-4" fill="none" stroke="#484644" stroke-width="1.500"/></svg>
        <span class="update">Update available (click to download)</span>
    </div>
</footer>

<!-- windows taskbar -->
<div class="taskbar">
    <div class="start">
        <svg width="36" height="36" viewBox="0 0 36 36"><defs><linearGradient id="wn" x1="0" y1="0" x2="1" y2="1"><stop offset="0" stop-color="#4fcbff"/><stop offset="1" stop-color="#0067c0"/></linearGradient></defs><path d="M0 1c0-1 1-1 1-1h16v17H0zM19 0h16c1 0 1 1 1 1v16H19zM0 19h17v17H1c-1 0-1-1-1-1zM19 19h17v16c0 1-1 1-1 1H19z" fill="url(#wn)"/></svg>
    </div>
    <div class="task-search">
        <svg width="24" height="26" viewBox="0 0 24 26"><circle cx="11" cy="11" r="9" fill="none" stroke="#252423" stroke-width="2.400"/><path d="M17 18l5 7" stroke="#252423" stroke-width="2.400"/></svg>
        <span>Search</span>
        <svg class="sun" width="52" height="46" viewBox="0 0 48 46"><path d="M24 0l3 9 9-6-3 9 12-2-8 7 10 3-10 3 8 7-12-2 3 9-9-6-3 9-3-9-9 6 3-9-12 2 8-7-10-3 10-3-8-7 12 2-3-9 9 6z" fill="#fbe98f"/><circle cx="24" cy="23" r="13" fill="#f3a84a"/><circle cx="19" cy="19" r="1.600" fill="#252423"/><circle cx="29" cy="19" r="1.600" fill="#252423"/><path d="M16 25c3 7 13 7 16 0" fill="none" stroke="#252423" stroke-width="1.500"/></svg>
    </div>
    <div class="task-apps">
        <div class="app">
            <svg width="40" height="40" viewBox="0 0 40 40"><path d="M2 4h13l4 4h19v30H2z" fill="#f7c32a"/><path d="M2 4h13l4 4H2z" fill="#d99a08"/><path d="M2 10h36v28H2z" fill="#ffd75e"/><path d="M14 24h12c1 0 2 1 2 2v12H12V26c0-1 1-2 2-2z" fill="#0f7ad1"/><path d="M17 29h6" stroke="#fff" stroke-width="1.600"/></svg>
            <i class="dot"></i>
        </div>
        <div class="app">
            <svg width="38" height="38" viewBox="0 0 48 48"><path d="M20 3h12c6 0 9 6 10 14 1 9-1 18-5 23-2 3-5 5-9 5H16c4-1 6-4 7-8l9-28c0-3-2-6-6-6z" fill="url(#cp1)"/><path d="M19 3h11c2 0 3 2 2 5l-9 30c-1 4-4 7-7 7H11C6 45 4 40 5 33L13 9c1-4 3-6 6-6z" fill="url(#cp2)"/><path d="M24 16h9c3 0 3 2 2 5l-3 12c-1 2-3 3-5 3h-6c2-1 3-3 3-5z" fill="#f3ecfb"/></svg>
            <i class="dot"></i>
        </div>
        <div class="app">
            <svg width="40" height="40" viewBox="0 0 40 40"><path d="M20 20L3.550 10.500A19 19 0 0 1 36.450 10.500z" fill="#ea4335"/><path d="M20 20L36.450 10.500A19 19 0 0 1 20 39z" fill="#fbbc04"/><path d="M20 20L20 39A19 19 0 0 1 3.550 10.500z" fill="#34a853"/><circle cx="20" cy="20" r="9.500" fill="#fff"/><circle cx="20" cy="20" r="7.500" fill="#1a73e8"/></svg>
            <i class="dot"></i>
        </div>
        <div class="app">
            <svg width="40" height="40" viewBox="0 0 40 40"><defs><linearGradient id="ed" x1="0" y1="0" x2="1" y2="1"><stop offset="0" stop-color="#39c6a5"/><stop offset="1" stop-color="#1b9de2"/></linearGradient></defs><path d="M1 19C2 8 10 1 20 1c11 0 19 8 19 17 0 6-5 8-9 8-5 0-7-2-7-4 3-2 3-5 1-7-4-4-12-4-17 0-3 1-5 3-6 4z" fill="url(#ed)"/><path d="M1 19c4-6 13-7 19-3-5 1-8 5-7 11 1 5 5 10 12 11-2 1-4 1-6 1C9 39 0 30 1 19z" fill="#0c5a9e"/><path d="M13 27c1 5 5 10 12 11 6-1 11-5 13-11-4 4-11 5-16 3-4-1-6-4-6-7-2 1-3 2-3 4z" fill="#1b7fd1"/></svg>
            <i class="dot"></i>
        </div>
        <div class="app current">
            <svg width="36" height="38" viewBox="0 0 36 38"><rect x="21" y="0" width="13" height="38" rx="1" fill="#c98d07"/><rect x="11" y="10" width="14" height="28" rx="1" fill="#f2c811"/><rect x="2" y="20" width="13" height="18" rx="1" fill="#f7dd6b"/></svg>
            <i class="bar-ind"></i>
        </div>
    </div>
    <div class="tray">
        <svg class="tray-up" width="16" height="10" viewBox="0 0 16 10"><path d="M1 9l7-7 7 7" fill="none" stroke="#252423" stroke-width="1.600"/></svg>
        <svg class="tray-cloud" width="26" height="22" viewBox="0 0 26 22"><path d="M6 21c-3 0-5-2-5-5s2-5 4-5c1-5 4-9 8-9s7 4 8 8c2 0 4 2 4 5 0 4-2 6-5 6z" fill="#9a9a9a" stroke="#252423" stroke-width="1.400"/><path d="M1 16c4-3 20-3 24 0 0 3-2 5-5 5H6c-3 0-5-2-5-5z" fill="#fff" stroke="#252423" stroke-width="1.200"/></svg>
        <div class="tray-lang">ENG<br>IN</div>
        <svg width="24" height="22" viewBox="0 0 24 22"><path d="M1 8c6-7 16-7 22 0M5 12c4-4 10-4 14 0M8 16c2-2 6-2 8 0" fill="none" stroke="#252423" stroke-width="1.800"/><circle cx="12" cy="20" r="1.800" fill="#252423"/></svg>
        <svg width="26" height="24" viewBox="0 0 26 24"><path d="M1 8h5l6-6v20l-6-6H1z" fill="none" stroke="#252423" stroke-width="1.400"/><path d="M15 8c2 2 2 6 0 8M18 5c3 4 3 10 0 14M21 2c5 5 5 15 0 20" fill="none" stroke="#252423" stroke-width="1.400"/></svg>
        <svg width="28" height="26" viewBox="0 0 28 26"><path d="M3 9h18v13H3zM21 13h3v5h-3zM2 25h20" fill="none" stroke="#252423" stroke-width="1.500"/><path d="M13 0L6 14h5l-2 9 8-14h-5z" fill="#252423"/></svg>
        <div class="tray-time">16:39<br>03-10-2025</div>
    </div>
</div>

</body>
</html>
```

FILE: styles.css
```css
* {
    box-sizing: border-box;
}

body {
    margin: 0;
    width: 1920px;
    height: 1080px;
    overflow: hidden;
    display: flex;
    flex-direction: column;
    font-family: "Open Sans", "Noto Sans", sans-serif;
    color: #252423;
    background: #f3f2f1;
}

/* ---------- title bar ---------- */
.titlebar {
    height: 51px;
    flex: none;
    display: flex;
    align-items: center;
    background: #3b3a39;
    color: #fff;
}

.tb-left {
    width: 780px;
    display: flex;
    align-items: center;
    padding-left: 24px;
}

.tb-icon {
    margin-right: 21px;
}

.tb-dim {
    opacity: .45;
    margin-right: 13px;
}

.tb-ln {
    fill: none;
    stroke: #fff;
    stroke-width: 1.5;
}

.tb-name {
    font-size: 17px;
    white-space: nowrap;
}

.tb-caret {
    width: 0;
    height: 0;
    margin-left: 10px;
    margin-bottom: 4px;
    border-left: 6px solid transparent;
    border-right: 6px solid transparent;
    border-top: 7px solid #fff;
}

.tb-search {
    width: 600px;
    height: 36px;
    display: flex;
    align-items: center;
    gap: 17px;
    padding: 2px 0 0 26px;
    background: #d2d2d0;
    border-radius: 2px;
    font-size: 19px;
    color: #3f5a5a;
}

.tb-s {
    fill: none;
    stroke: #323130;
    stroke-width: 1.3;
}

.tb-right {
    flex: 1;
    display: flex;
    align-items: center;
    padding-left: 220px;
}

.tb-sign {
    font-size: 17px;
    margin-right: 16px;
}

.win-min {
    width: 15px;
    height: 2px;
    margin-left: 48px;
    background: #fff;
}

.win-max {
    margin-left: 50px;
}

.win-close {
    margin-left: 50px;
}

/* ---------- tabs ---------- */
.tabrow {
    height: 47px;
    flex: none;
    display: flex;
    padding-left: 11px;
    background: #f9f9f9;
    font-size: 20px;
}

.tab {
    position: relative;
    padding: 0 23px;
    line-height: 47px;
}

.tab-file {
    margin-right: 10px;
}

.tab-help {
    margin-left: 3px;
}

.tab.active {
    font-weight: 600;
}

.tab.active span {
    display: inline-block;
    height: 47px;
    border-bottom: 5px solid #117865;
}

.tab.ctx {
    margin-left: 2px;
    padding-right: 19px;
    background: #fff;
    color: #117865;
    font-weight: 600;
}

.tab.ctx + .tab.ctx {
    margin-left: 7px;
    padding-right: 23px;
}

.share-btn {
    margin: 6px 8px 0 auto;
    width: 125px;
    height: 36px;
    display: flex;
    align-items: center;
    gap: 11px;
    padding-left: 9px;
    background: #117865;
    border-radius: 4px;
    color: #fff;
    font-size: 16px;
}

/* ---------- ribbon ---------- */
.ribbon {
    position: relative;
    height: 142px;
    flex: none;
    display: flex;
    padding-top: 7px;
    background: #f9f9f9;
    box-shadow: 0 2px 5px rgba(0, 0, 0, .18);
    z-index: 2;
}

.group {
    height: 132px;
    display: flex;
    flex-direction: column;
    border-right: 1px solid #d2d0ce;
}

.items {
    height: 117px;
    display: grid;
    padding-top: 7px;
}

.g-clipboard { width: 240px; }
.g-clipboard .items { grid-template-columns: 68px 1fr; padding-left: 8px; }
.g-data { width: 537px; }
.g-data .items { grid-template-columns: 70px 76px 86px 58px 62px 82px 82px; padding-left: 8px; }
.g-queries { width: 173px; }
.g-queries .items { grid-template-columns: 90px 58px; padding-left: 10px; }
.g-insert { width: 220px; }
.g-insert .items { grid-template-columns: 60px 60px 72px; padding-left: 13px; }
.g-calc { width: 279px; }
.g-calc .items { grid-template-columns: 110px 74px 72px; padding-left: 11px; }
.g-sens { width: 109px; }
.g-sens .items { grid-template-columns: 1fr; }
.g-share { width: 88px; }
.g-share .items { grid-template-columns: 1fr; }
.g-copilot { width: 197px; }
.g-copilot .items { grid-template-columns: 100px 70px; padding-left: 17px; }

.item {
    display: flex;
    flex-direction: column;
    align-items: center;
    min-width: 0;
}

.ri {
    width: 48px;
    height: 48px;
    flex: none;
}

.lbl {
    margin-top: 3px;
    font-size: 16.5px;
    line-height: 24px;
    text-align: center;
    white-space: nowrap;
}

.item.disabled .lbl {
    color: #c8c6c4;
}

.item.disabled .chev {
    border-color: #c8c6c4;
}

.chev {
    display: inline-block;
    width: 6px;
    height: 6px;
    margin: 0 0 3px 2px;
    border-right: 1.3px solid #323130;
    border-bottom: 1.3px solid #323130;
    transform: rotate(45deg);
}

.small-list {
    display: flex;
    flex-direction: column;
    gap: 10px;
    margin-top: -3px;
}

.small {
    height: 26px;
    display: flex;
    align-items: center;
    gap: 7px;
    font-size: 17px;
    white-space: nowrap;
}

.group-name {
    height: 15px;
    line-height: 15px;
    font-size: 14px;
    color: #484644;
    text-align: center;
}

.collapse {
    position: absolute;
    right: 8px;
    top: 125px;
}

.ic {
    fill: none;
    stroke: #484644;
    stroke-width: 1.6;
}

.ifw {
    fill: #fff;
    stroke: #484644;
    stroke-width: 1.6;
}

.idk {
    fill: #a19f9d;
    stroke: #484644;
}

.keys {
    fill: none;
    stroke: #323130;
    stroke-width: 4;
}

.x-mark {
    fill: #fff;
    font-size: 17px;
    font-weight: 700;
    text-anchor: middle;
}

.a-mark {
    fill: #2b88d8;
    font-size: 30px;
    text-anchor: middle;
}

.fx-mark {
    fill: #b5b3b1;
    font-family: "Liberation Serif", serif;
    font-style: italic;
    font-size: 24px;
}

.fx-mini {
    fill: #252423;
    font-family: "Liberation Serif", serif;
    font-style: italic;
    font-weight: 700;
    font-size: 15px;
}

/* ---------- main ---------- */
.main {
    height: 732px;
    flex: none;
    display: flex;
}

.rail {
    position: relative;
    width: 61px;
    flex: none;
    padding-top: 0;
    border-right: 1px solid #e1dfdd;
    background: #f3f2f1;
}

.rail-btn {
    height: 60px;
    display: flex;
    flex-direction: column;
    align-items: center;
    justify-content: center;
    padding-right: 1px;
}

.rail-btn.active {
    border-left: 4px solid #117865;
    padding-right: 4px;
}

.rail-doc span {
    margin-top: -4px;
    font-size: 10px;
    font-weight: 700;
    line-height: 11px;
    color: #7a7876;
}

.center {
    width: 1319px;
    flex: none;
    display: flex;
    flex-direction: column;
}

.canvas {
    height: 679px;
    padding-left: 64px;
    background: #fff;
}

.frame {
    position: relative;
    width: 1190px;
    height: 669px;
    padding: 0 3px 3px;
    background:
        repeating-linear-gradient(180deg, #555 0 3px, transparent 3px 5px) left top / 3px 100% no-repeat,
        repeating-linear-gradient(180deg, #555 0 3px, transparent 3px 5px) right top / 3px 100% no-repeat,
        repeating-linear-gradient(90deg, #555 0 3px, transparent 3px 5px) left bottom / 100% 3px no-repeat;
}

.report {
    display: flex;
    height: 666px;
}

.col-left {
    width: 979px;
    display: flex;
    flex-direction: column;
}

.col-right {
    width: 205px;
    display: flex;
    flex-direction: column;
}

.visual {
    position: relative;
}

.title-card {
    height: 76px;
    padding: 7px 0 0 3px;
    background: #8aabc2;
    font-size: 33px;
    font-weight: 700;
    line-height: 46px;
    white-space: nowrap;
}

.line-card {
    height: 267px;
    background: #a9bfd2;
}

.bottom-row {
    display: flex;
    height: 323px;
    border-top: 1px solid #d6e1e9;
}

.region-card {
    width: 512px;
    background: #c4d4df;
}

.category-card {
    width: 467px;
    background: #8aabc2;
    border-left: 1px solid #d6e1e9;
}

.chart {
    display: block;
}

.category-card .chart,
.region-card .chart {
    margin-top: -1px;
}

.category-card .chart {
    margin-left: -1px;
}

.chart text {
    font-family: Roboto, "Open Sans", sans-serif;
}

.chart .vis-title {
    font-size: 14px;
    letter-spacing: .6px;
    fill: #252423;
}

.grid {
    fill: none;
    stroke: #c9d7e2;
    stroke-dasharray: 1 3;
}

.chart .tick {
    font-size: 11.5px;
    fill: #757b80;
}

.end {
    text-anchor: end;
}

.mid {
    text-anchor: middle;
}

.chart .axis-y {
    font-size: 12.5px;
    letter-spacing: .7px;
    fill: #252423;
    text-anchor: middle;
}

.chart .axis-x {
    font-size: 13px;
    fill: #252423;
    text-anchor: middle;
}

.line {
    fill: none;
    stroke: #2f4858;
    stroke-width: 2.8;
    stroke-linejoin: round;
}

.xl text {
    font-size: 11.5px;
    fill: #7a8086;
    text-anchor: end;
}

.bar {
    fill: #35495a;
}

.donut {
    fill: none;
    stroke: #35495a;
    stroke-width: 42;
}

.leader {
    fill: none;
    stroke: #748a9c;
}

.chart .donut-label {
    font-size: 11.5px;
    fill: #6a7e8e;
}

.chart .legend-title {
    font-size: 12.5px;
    font-weight: 700;
    fill: #66727c;
}

.kpi-card {
    height: 176px;
    background: #a9bfd2;
    border-left: 1px solid #d6e1e9;
}

.kpi-title {
    padding: 2px 0 0 5px;
    font-family: Roboto, sans-serif;
    font-size: 18px;
    line-height: 20px;
}

.kpi-value {
    margin-top: 48px;
    font-family: Roboto, sans-serif;
    font-size: 49px;
    line-height: 62px;
    text-align: center;
    white-space: nowrap;
}

.kpi-label {
    margin-top: -5px;
    font-family: Roboto, sans-serif;
    font-size: 14.5px;
    text-align: center;
    color: #6f7a84;
}

.actions {
    position: absolute;
    right: 0;
    bottom: 1px;
    display: flex;
    gap: 6px;
}

.act {
    width: 35px;
    height: 35px;
    display: flex;
    align-items: center;
    justify-content: center;
    gap: 5px;
    background: #fff;
}

.act-ln {
    fill: none;
    stroke: #7a7876;
    stroke-width: 1.5;
}

.act-more i {
    width: 4px;
    height: 4px;
    border-radius: 50%;
    background: #605e5c;
}

/* ---------- slicer ---------- */
.slicer {
    flex: 1;
    padding: 1px 0 0 12px;
    background: #c4d4df;
    border: 1px solid #b5bcc2;
    border-right: 0;
}

.slicer-head {
    height: 19px;
    font-family: Roboto, sans-serif;
    font-size: 12.5px;
    letter-spacing: .7px;
    line-height: 21px;
    color: #323130;
}

.slicer-row {
    height: 26.9px;
    display: flex;
    align-items: center;
    gap: 8px;
    font-size: 13.5px;
    color: #323130;
    white-space: nowrap;
}

.sq {
    width: 15px;
    height: 15px;
    border: 1px solid #7d7a78;
}

.sq.on {
    background: #252423;
    border-color: #252423;
}

.hd {
    position: absolute;
    border: 0 solid #a8a8a8;
}

.tl { top: -1px; left: -1px; width: 14px; height: 14px; border-width: 5px 0 0 5px; }
.tr { top: -1px; right: 0; width: 14px; height: 14px; border-width: 5px 5px 0 0; }
.bl { bottom: 0; left: -1px; width: 14px; height: 14px; border-width: 0 0 5px 5px; }
.br { bottom: 0; right: 0; width: 14px; height: 14px; border-width: 0 5px 5px 0; }
.tm { top: -1px; left: 93px; width: 18px; height: 4px; background: #a8a8a8; }
.bm { bottom: 0; left: 93px; width: 18px; height: 4px; background: #a8a8a8; }
.ml { top: 237px; left: -1px; width: 5px; height: 18px; background: #a8a8a8; }
.mr { top: 237px; right: 0; width: 5px; height: 18px; background: #a8a8a8; }

.tooltip {
    position: absolute;
    left: 738px;
    top: 653px;
    width: 145px;
    height: 36px;
    background: #fff;
    border: 2px solid #111;
    font-size: 17px;
    line-height: 32px;
    text-align: center;
    white-space: nowrap;
    z-index: 3;
}

/* ---------- page tabs ---------- */
.pagebar {
    height: 53px;
    display: flex;
    background: #f3f2f1;
}

.view-btn {
    position: relative;
    width: 64px;
    display: flex;
    align-items: flex-start;
    justify-content: center;
    padding-top: 10px;
}

.view-btn + .view-btn {
    width: 68px;
    padding-top: 6px;
}

.view-btn.active::after {
    content: "";
    position: absolute;
    left: 15px;
    bottom: 7px;
    width: 36px;
    height: 5px;
    border-radius: 3px;
    background: #117865;
}

.page-nav {
    width: 59px;
    display: flex;
    align-items: flex-start;
    gap: 26px;
    padding: 18px 0 0 8px;
    border-right: 1px solid #a19f9d;
}

.tri-l,
.tri-r {
    width: 0;
    height: 0;
    border-top: 7px solid transparent;
    border-bottom: 7px solid transparent;
}

.tri-l {
    border-right: 7px solid #c8c6c4;
}

.tri-r {
    border-left: 7px solid #c8c6c4;
}

.page-tab {
    width: 115px;
    background: #fff;
    border-right: 1px solid #c8c6c4;
    font-size: 17px;
    line-height: 51px;
    text-align: center;
}

.page-tab.current {
    width: 116px;
    border-right: 0;
    border-bottom: 6px solid #117865;
    font-weight: 600;
    line-height: 51px;
}

.page-add {
    width: 59px;
    background: #117865;
    color: #fff;
    font-size: 30px;
    font-weight: 700;
    line-height: 46px;
    text-align: center;
}

/* ---------- side panes ---------- */
.pane {
    position: relative;
    width: 270px;
    flex: none;
    background: #f3f2f1;
    border-left: 1px solid #e1dfdd;
}

.pane-head {
    height: 58px;
    display: flex;
    align-items: center;
    justify-content: space-between;
    padding: 0 12px 0 10px;
    font-size: 22.5px;
    font-weight: 600;
}

.build-title {
    height: 20px;
    padding-left: 10px;
    font-size: 16.5px;
    font-weight: 600;
    line-height: 20px;
}

.viz-tabs {
    position: relative;
    height: 75px;
    display: flex;
    padding: 8px 0 0 10px;
    border-bottom: 1px solid #8a8886;
}

.viz-tabs::after {
    content: "";
    position: absolute;
    left: 26px;
    bottom: -7px;
    width: 16px;
    height: 16px;
    background: #f3f2f1;
    border-left: 1px solid #8a8886;
    border-top: 1px solid #8a8886;
    transform: rotate(45deg);
}

.viz-tab {
    width: 48px;
    height: 48px;
    flex: none;
    display: flex;
    align-items: center;
    justify-content: center;
    margin-right: 50px;
}

.viz-tab.selected {
    background: #d0d0d0;
    border-radius: 2px;
    margin-right: 52px;
}

.viz-tab:last-child {
    margin-right: 0;
}

.viz-grid {
    display: grid;
    grid-template-columns: repeat(6, 42px);
    grid-auto-rows: 42px;
    justify-items: center;
    align-items: center;
    margin-top: 10px;
    padding-left: 7px;
}

.vi {
    width: 28px;
    height: 28px;
    display: block;
}

.vi-active {
    padding: 3px;
    border: 1px solid #252423;
}

.ln {
    fill: none;
    stroke: #484644;
    stroke-width: 1.3;
}

.bln {
    fill: none;
    stroke: #0f6cbd;
    stroke-width: 1.3;
}

.wh {
    fill: #fff;
    stroke: #605e5c;
    stroke-width: 1.1;
}

.bl {
    fill: #6cb0eb;
    stroke: #0f6cbd;
    stroke-width: 1.2;
}

.gy {
    fill: #b3b0ad;
    stroke: #8a8886;
}

.fun {
    fill: #6cb0eb;
    stroke: #0f6cbd;
    stroke-width: 1.6;
}

.mini {
    fill: #2b88d8;
    font-size: 11px;
    text-anchor: middle;
}

.bigb {
    fill: #0f6cbd;
    font-size: 24px;
    font-weight: 700;
    text-anchor: middle;
}

.py {
    fill: #2b88d8;
    font-size: 23px;
}

.viz-more {
    height: 48px;
    display: flex;
    gap: 7px;
    padding: 16px 0 0 18px;
    border-bottom: 1px solid #e1dfdd;
}

.viz-more i {
    width: 3px;
    height: 3px;
    border-radius: 50%;
    background: #252423;
}

.field-sec {
    position: relative;
    height: 227px;
    padding: 14px 0 0 6px;
}

.field-label {
    height: 24px;
    padding-left: 10px;
    font-size: 16.5px;
    line-height: 24px;
    color: #323130;
}

.well {
    width: 253px;
    height: 51px;
    margin-top: 8px;
    padding: 3px;
    background: #fff;
    border: 1px dashed #c8c6c4;
}

.pill {
    height: 33px;
    display: flex;
    align-items: center;
    padding: 0 6px 0 5px;
    background: #eeeded;
    border: 1px solid #c8c6c4;
    border-radius: 2px;
    font-size: 17px;
    color: #323130;
}

.pill span {
    flex: 1;
}

.pill svg + svg {
    margin-left: 10px;
}

.drill-title {
    height: 24px;
    margin-top: 17px;
    padding-left: 10px;
    font-size: 17px;
    font-weight: 600;
    line-height: 24px;
    color: #484644;
}

.toggle-row {
    width: 229px;
    height: 24px;
    display: flex;
    align-items: center;
    justify-content: space-between;
    margin-top: 12px;
    padding-left: 10px;
    font-size: 17px;
    color: #484644;
}

.toggle-row + .toggle-row {
    margin-top: 16px;
}

.toggle {
    width: 48px;
    height: 24px;
    display: flex;
    align-items: center;
    gap: 3px;
    padding: 0 5px;
    border-radius: 12px;
    font-size: 13px;
}

.toggle b {
    font-weight: 400;
}

.toggle i {
    width: 12px;
    height: 12px;
    border-radius: 50%;
}

.toggle.off {
    background: #fff;
    border: 1px solid #8a8886;
    color: #605e5c;
}

.toggle.off i {
    background: #605e5c;
}

.toggle.on {
    background: #117865;
    color: #fff;
}

.toggle.on i {
    background: #fff;
}

.pane-scroll {
    position: absolute;
    right: 0;
    top: 4px;
    width: 9px;
    height: 164px;
    border-radius: 5px;
    background: #888;
}

.data-search {
    width: 257px;
    height: 36px;
    display: flex;
    align-items: center;
    gap: 10px;
    margin: 10px 0 0 6px;
    padding: 1px 0 0 18px;
    background: #fff;
    border: 1px solid #d2d0ce;
    border-bottom-color: #8a8886;
    border-radius: 4px;
    font-size: 18.5px;
    color: #605e5c;
}

.field-list {
    margin-top: 3px;
    padding-left: 65px;
}

.field-row {
    height: 36px;
    display: flex;
    align-items: center;
    font-size: 17px;
    color: #323130;
    white-space: nowrap;
}

.cb {
    width: 18px;
    height: 18px;
    flex: none;
    margin-right: 12px;
    display: flex;
    align-items: center;
    justify-content: center;
    background: #f8f7f6;
    border: 1px solid #8a8886;
    border-radius: 3px;
}

.cb.checked {
    background: #117865;
    border-color: #117865;
}

.fi {
    width: 27px;
    flex: none;
    font-size: 26px;
    line-height: 22px;
    font-weight: 300;
    display: flex;
}

.data-scroll {
    position: absolute;
    right: 6px;
    top: 299px;
    width: 12px;
    height: 421px;
    background: #8a8886;
}

/* ---------- status bar ---------- */
.status {
    height: 37px;
    flex: none;
    display: flex;
    align-items: center;
    justify-content: space-between;
    padding: 2px 6px 0 6px;
    background: #f3f2f1;
    border-top: 1px solid #e1dfdd;
    border-bottom: 2px solid #111;
    font-size: 17px;
    color: #605e5c;
}

.status-right {
    display: flex;
    align-items: center;
}

.zoom-sign {
    font-size: 18px;
    font-weight: 600;
}

.zoom-slider {
    position: relative;
    width: 154px;
    height: 2px;
    margin: 0 4px 0 9px;
    background: #605e5c;
}

.zoom-slider .thumb {
    position: absolute;
    left: 39px;
    top: -7px;
    width: 4px;
    height: 16px;
    background: #484644;
}

.zoom-slider .mid-tick {
    position: absolute;
    left: 72px;
    top: -3px;
    width: 1px;
    height: 8px;
    background: #605e5c;
}

.zoom-pct {
    margin-left: 21px;
    font-size: 17px;
}

.fit {
    margin-left: 28px;
}

.update {
    margin-left: 21px;
    font-size: 17.2px;
    white-space: nowrap;
}

/* ---------- taskbar ---------- */
.taskbar {
    height: 71px;
    flex: none;
    display: flex;
    align-items: center;
    padding-left: 608px;
    background: #eeeeee;
}

.start {
    width: 57px;
    display: flex;
}

.task-search {
    position: relative;
    width: 328px;
    height: 46px;
    display: flex;
    align-items: center;
    gap: 14px;
    padding-left: 16px;
    background: #fbfbfb;
    border: 1px solid #dcdcdc;
    border-bottom: 2px solid #d0d0d0;
    border-radius: 23px;
    font-size: 19px;
    color: #5d5d5d;
}

.sun {
    position: absolute;
    right: 16px;
    top: -1px;
}

.task-apps {
    display: flex;
    margin-left: 5px;
}

.app {
    position: relative;
    width: 65.5px;
    height: 58px;
    display: flex;
    justify-content: center;
    padding-top: 7px;
}

.app.current {
    width: 56px;
    margin-left: 5px;
    background: #f8f8f8;
    border: 1px solid #e8e8e8;
    border-radius: 4px;
    padding-top: 6px;
}

.dot {
    position: absolute;
    left: 50%;
    bottom: 0;
    width: 8px;
    height: 8px;
    margin-left: -4px;
    border-radius: 50%;
    background: #777;
}

.bar-ind {
    position: absolute;
    left: 15px;
    bottom: 0;
    width: 24px;
    height: 5px;
    border-radius: 3px;
    background: #0078d4;
}

.tray {
    display: flex;
    align-items: center;
    flex: 1;
}

.tray-up {
    margin-left: 196px;
}

.tray-lang {
    width: 70px;
    margin: 0 11px 0 9px;
    font-size: 17px;
    line-height: 24px;
    text-align: center;
}

.tray svg + svg {
    margin-left: 10px;
}

.tray .tray-cloud {
    margin-left: 29px;
}

.tray-time {
    margin-left: auto;
    padding-right: 28px;
    font-size: 17.5px;
    line-height: 24px;
    text-align: right;
}
```
